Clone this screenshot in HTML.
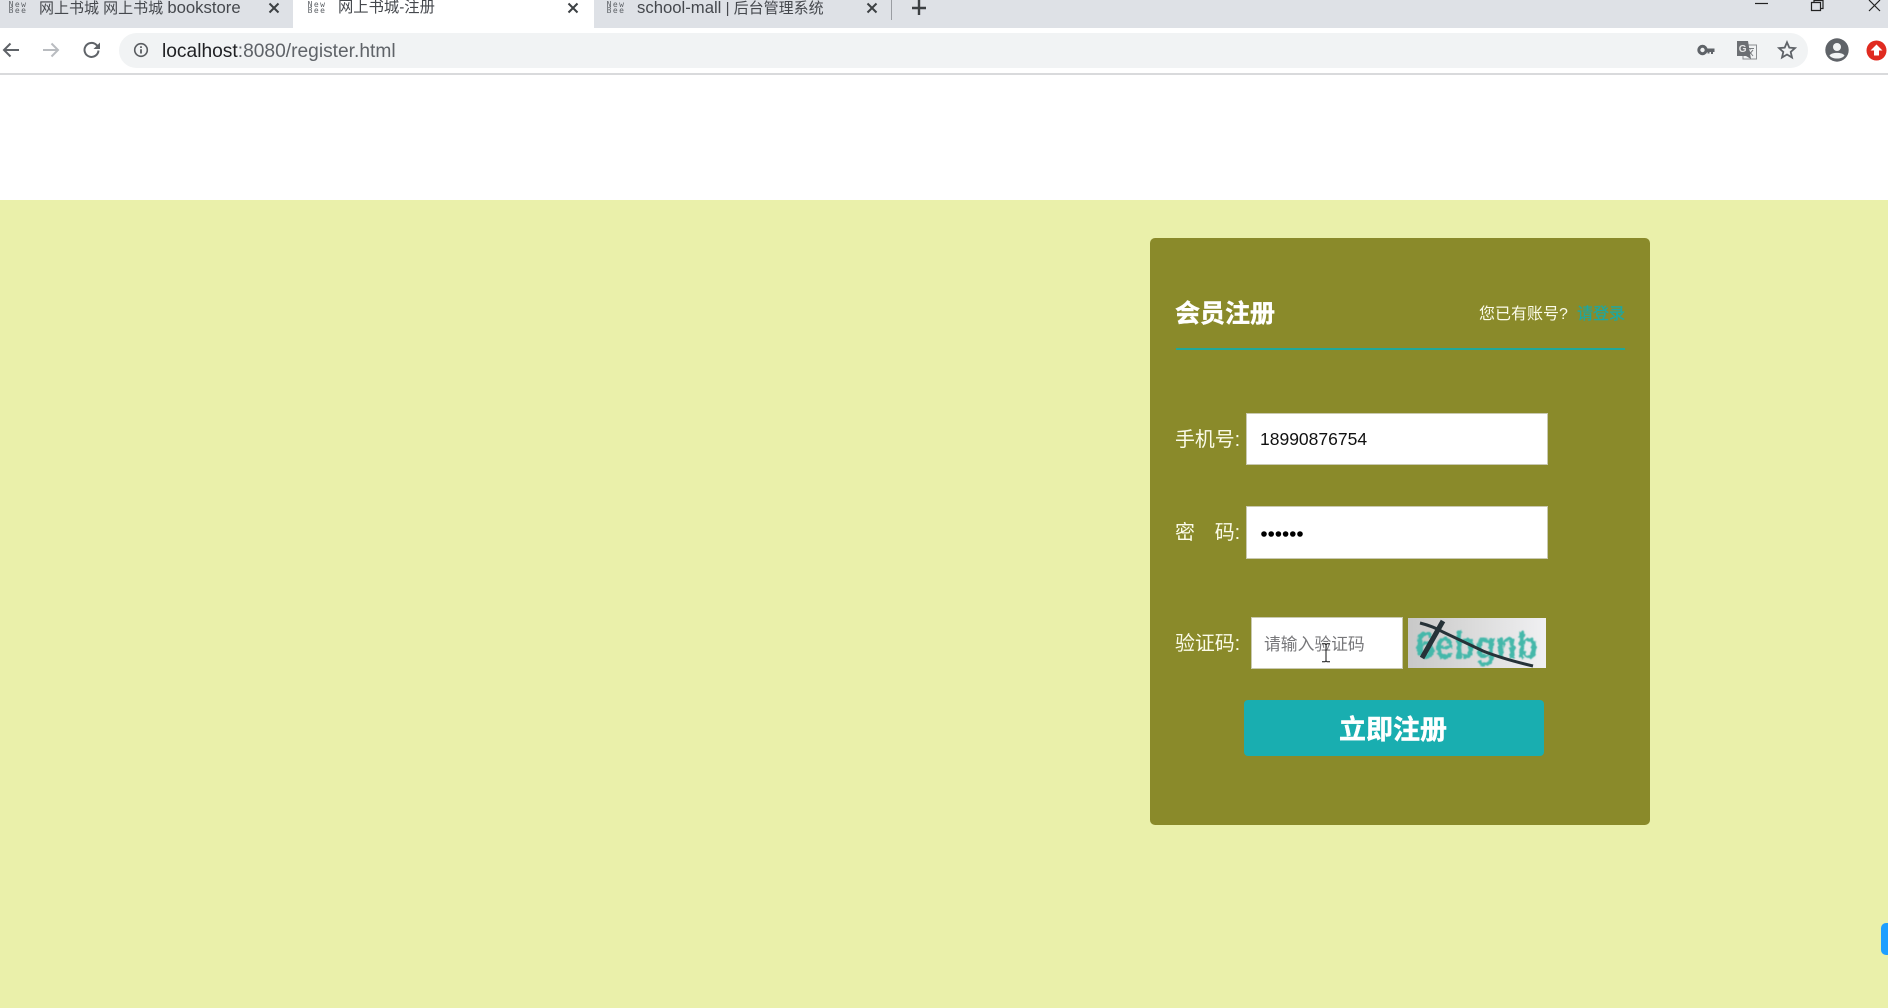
<!DOCTYPE html>
<html lang="zh"><head><meta charset="utf-8"><title>网上书城-注册</title>
<style>
html,body{margin:0;padding:0;width:1888px;height:1008px;overflow:hidden;background:#fff;font-family:"Liberation Sans","Noto Sans CJK SC",sans-serif}
div,span,a,svg{position:absolute;display:block}
.t{white-space:nowrap}
.tabbar{left:0;top:0;width:1888px;height:28px;background:#dee1e6}
.tab{top:0;height:28px}
.tabt{top:-4px;height:24px;line-height:24px;font-size:15px;color:#45484d;white-space:nowrap}
.tabt b{font-weight:normal;font-size:16.700px}
.fav{top:2px;width:22px;font:8px/6px "DejaVu Sans Mono","Liberation Mono",monospace;letter-spacing:1.400px;color:#5f6368;text-align:center;white-space:pre}
.lab{left:1175px;height:30px;line-height:30px;font-size:19.900px;color:#fbfbe9;white-space:pre}
.inp{background:#fff;box-sizing:border-box;border:1px solid #c9c9b0}
</style></head><body>
<div class="tabbar"></div>
<div class="tab" style="left:293px;width:301px;height:28px;background:#fff"></div>
<div style="left:281px;top:0;width:12px;height:28px;background:#dee1e6;border-bottom-right-radius:11px"></div>
<div style="left:594px;top:0;width:12px;height:28px;background:#dee1e6;border-bottom-left-radius:11px"></div>

<div class="fav" style="left:7px">New
Bee</div>
<div class="tabt" style="left:39px;top:-4px">网上书城 网上书城 <b style="position:static;display:inline">bookstore</b></div>
<svg style="left:268px;top:2px" width="12" height="12" viewBox="0 0 12 12"><path d="M1.500 1.500l9 9M10.500 1.500l-9 9" stroke="#3c4043" stroke-width="2" fill="none"/></svg>

<div class="fav" style="left:306px">New
Bee</div>
<div class="tabt" style="left:338px;font-size:15.300px">网上书城-注册</div>
<svg style="left:567px;top:2px" width="12" height="12" viewBox="0 0 12 12"><path d="M1.500 1.500l9 9M10.500 1.500l-9 9" stroke="#3c4043" stroke-width="2" fill="none"/></svg>

<div class="fav" style="left:605px">New
Bee</div>
<div class="tabt" style="left:637px"><b style="position:static;display:inline">school-mall</b> | 后台管理系统</div>
<svg style="left:866px;top:2px" width="12" height="12" viewBox="0 0 12 12"><path d="M1.500 1.500l9 9M10.500 1.500l-9 9" stroke="#3c4043" stroke-width="2" fill="none"/></svg>
<div style="left:891px;top:0;width:1px;height:20px;background:#9a9da2"></div>
<svg style="left:911px;top:0" width="16" height="16" viewBox="0 0 16 16"><path d="M8 0v15M1 8h14" stroke="#3c4043" stroke-width="2.400" fill="none"/></svg>

<svg style="left:1755px;top:0" width="130" height="14" viewBox="0 0 130 14" fill="none" stroke="#222" stroke-width="1.200"><path d="M0 3.500h13"/><path d="M56.500 2.500h9v8h-9zM59 2.500v-2h9v8h-2.500"/><path d="M114 0l11 11M125 0l-11 11"/></svg>

<div style="left:0;top:28px;width:1888px;height:45px;background:#fff"></div>
<div style="left:0;top:73px;width:1888px;height:2px;background:#d9dadc"></div>
<svg style="left:1px;top:41px" width="20" height="18" viewBox="0 0 20 18"><path d="M18 9H3M9.500 2.500L3 9l6.500 6.500" stroke="#5f6368" stroke-width="2" fill="none"/></svg>
<svg style="left:41px;top:41px" width="20" height="18" viewBox="0 0 20 18"><path d="M2 9h15M10.500 2.500L17 9l-6.500 6.500" stroke="#b9bcc0" stroke-width="2" fill="none"/></svg>
<svg style="left:82px;top:40px" width="20" height="20" viewBox="0 0 20 20"><path d="M16.500 10.500A7 7 0 1 1 14.500 5L17 7.500" stroke="#5f6368" stroke-width="2" fill="none"/><path d="M18 2.500V9h-6.500z" fill="#5f6368"/></svg>

<div style="left:119px;top:33px;width:1689px;height:35px;border-radius:18px;background:#f1f3f4"></div>
<svg style="left:133px;top:42px" width="16" height="16" viewBox="0 0 16 16"><circle cx="8" cy="8" r="6.300" stroke="#5a5d61" stroke-width="1.600" fill="none"/><path d="M8 7.200v4.300M8 4.300v1.700" stroke="#5a5d61" stroke-width="1.800"/></svg>
<div class="t" style="left:162px;top:39px;height:26px;line-height:26px;font-size:19.200px;color:#5f6368"><span style="position:static;display:inline;color:#202124">localhost</span>:8080/register.html</div>

<svg style="left:1697px;top:43px" width="18" height="14" viewBox="0 0 18 14"><circle cx="5.500" cy="7" r="3.700" stroke="#5f6368" stroke-width="3" fill="none"/><path d="M9 5.500h8.500V9h-1.500v2h-2V9h-1.500v1.500h-2V9H9z" fill="#5f6368"/></svg>
<svg style="left:1737px;top:41px" width="20" height="19" viewBox="0 0 20 19"><rect x="6" y="4" width="13.500" height="14" fill="#f1f3f4" stroke="#8a8d91"/><path d="M10 7.500h7M13.500 7v1.500M11 15l5-6M12 10l4 5" stroke="#7a7d81" stroke-width="1" fill="none"/><path d="M0 0h11l3 18-5-3H0z" fill="#6c6f73"/><text x="1.800" y="11" font-size="10" font-weight="bold" fill="#e8e8e8" font-family="Liberation Sans">G</text></svg>
<svg style="left:1777px;top:40px" width="20" height="20" viewBox="0 0 20 20"><path d="M10 2.300l2.300 5.300 5.700.5-4.300 3.800 1.300 5.600-5-3-5 3 1.300-5.600L2 8.100l5.700-.5z" stroke="#5f6368" stroke-width="1.800" fill="none"/></svg>
<svg style="left:1825px;top:38px" width="24" height="24" viewBox="0 0 24 24"><circle cx="12" cy="12" r="11.700" fill="#5f6368"/><circle cx="12" cy="9" r="4" fill="#f1f3f4"/><path d="M4.500 17.500c2-3.500 13-3.500 15 0-1.500 2-4 3-7.500 3s-6-1-7.500-3z" fill="#f1f3f4"/></svg>
<svg style="left:1866px;top:40px" width="21" height="21" viewBox="0 0 21 21"><circle cx="10.500" cy="10.500" r="10" fill="#e02b20"/><path d="M10.500 4.500l6 6h-3.500v5h-5v-5H4.500z" fill="#fff"/></svg>

<div style="left:0;top:200px;width:1888px;height:808px;background:#eaf0aa"></div>
<div style="left:1881px;top:923px;width:7px;height:32px;background:#1e9fff;border-radius:5px 0 0 5px"></div>

<div style="left:1150px;top:238px;width:500px;height:587px;background:#8a8a2a;border-radius:5px"></div>
<div class="t" style="left:1175px;top:296px;height:36px;line-height:36px;font-size:25px;font-weight:bold;color:#fff;-webkit-text-stroke:.4px #fff">会员注册</div>
<div class="t" style="left:1479px;top:303px;height:24px;line-height:24px;font-size:16px;color:#fbfbe9">您已有账号?</div>
<div class="t" style="left:1577px;top:303px;height:24px;line-height:24px;font-size:16px;color:#1fa7a0;-webkit-text-stroke:.3px #1fa7a0">请登录</div>
<div style="left:1176px;top:348px;width:449px;height:2px;background:#1fa79a"></div>

<div class="lab" style="top:425px">手机号:</div>
<div class="inp" style="left:1246px;top:413px;width:302px;height:52px"></div>
<div class="t" style="left:1260px;top:426px;height:26px;line-height:26px;font-size:17.500px;color:#111">18990876754</div>

<div class="lab" style="top:518px">密　码:</div>
<div class="inp" style="left:1246px;top:506px;width:302px;height:53px"></div>
<svg style="left:1260px;top:530px" width="44" height="8" viewBox="0 0 44 8" fill="#000"><circle cx="4" cy="4" r="2.800"/><circle cx="11.200" cy="4" r="2.800"/><circle cx="18.400" cy="4" r="2.800"/><circle cx="25.600" cy="4" r="2.800"/><circle cx="32.800" cy="4" r="2.800"/><circle cx="40" cy="4" r="2.800"/></svg>

<div class="lab" style="top:629px">验证码:</div>
<div class="inp" style="left:1251px;top:617px;width:152px;height:52px"></div>
<div class="t" style="left:1264px;top:632px;height:26px;line-height:26px;font-size:16.800px;color:#77777a">请输入验证码</div>
<svg style="left:1320px;top:643px" width="12" height="20" viewBox="0 0 12 20"><path d="M2 .8h3l1 1 1-1h3M6 1.500v16M2 18.800h3l1-1 1 1h3" stroke="#111" stroke-width="1" fill="none"/></svg>

<svg style="left:1408px;top:618px" width="138" height="50" viewBox="0 0 138 50">
<defs><linearGradient id="g" x1="0" y1="0" x2="1" y2="0"><stop offset="0" stop-color="#c8c8c8"/><stop offset=".5" stop-color="#dcdcdc"/><stop offset="1" stop-color="#f0f0f2"/></linearGradient><filter id="b" x="-5%" y="-20%" width="110%" height="140%"><feTurbulence type="fractalNoise" baseFrequency=".25" numOctaves="2" seed="4"/><feDisplacementMap in="SourceGraphic" scale="5" xChannelSelector="R" yChannelSelector="G"/><feGaussianBlur stdDeviation=".6"/></filter></defs>
<rect width="138" height="50" fill="url(#g)"/>
<text x="8" y="40" font-family="Liberation Sans" font-size="38" font-weight="bold" fill="#45b8aa" filter="url(#b)" textLength="122" lengthAdjust="spacingAndGlyphs">6ebgnb</text>
<path d="M12 5C20 7 28 10 35 14L75 33C90 39 108 44 125 48" stroke="#263238" stroke-width="3" fill="none"/>
<path d="M35 3L14 40" stroke="#263238" stroke-width="5" fill="none"/>
</svg>

<div style="left:1244px;top:700px;width:300px;height:56px;background:#19aeb0;border-radius:4px"></div>
<div class="t" style="left:1339px;top:711px;height:38px;line-height:38px;font-size:27px;font-weight:bold;color:#fff;-webkit-text-stroke:.4px #fff">立即注册</div>
</body></html>
